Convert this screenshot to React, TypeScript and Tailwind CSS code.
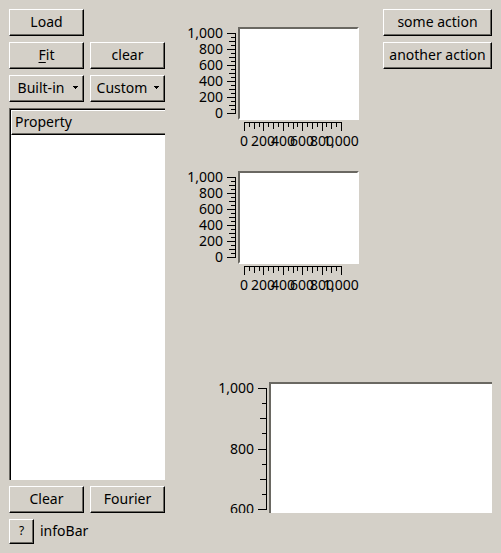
import type { ReactNode } from "react";
import clsx from "clsx";

type ButtonProps = { children: ReactNode; menu?: boolean; small?: boolean };

function ToolButton({ children, menu, small }: ButtonProps) {
  return (
    <button
      type="button"
      aria-haspopup={menu ? "menu" : undefined}
      className={clsx(
        "flex items-center justify-center whitespace-nowrap border border-t-white border-l-white border-r-black border-b-black bg-[#d4d0c8] pb-px shadow-[inset_-1px_-1px_0_#6a6862]",
        small ? "h-[25px] w-[25px] text-xs" : "h-[27px] w-full",
      )}
    >
      {menu ? (
        <>
          <span className="flex-1 text-center">{children}</span>
          <svg width="11" height="4" viewBox="0 0 11 4" shapeRendering="crispEdges" aria-hidden="true">
            <path d="M1 0h5v1h-1v1h-1v1h-1v-1h-1v-1h-1z" />
          </svg>
        </>
      ) : (
        <span>{children}</span>
      )}
    </button>
  );
}

type Tick = { at: number; label?: string; size: number };

/* Four sub-divisions per labelled step, the middle one a little longer. */
function makeTicks(values: number[], start: number, step: number): Tick[] {
  const ticks: Tick[] = [];
  values.forEach((value, i) => {
    ticks.push({ at: Math.round(start + i * step), label: value.toLocaleString("en-US"), size: 9 });
    if (i < values.length - 1) {
      [1, 2, 3].forEach((n) =>
        ticks.push({ at: Math.round(start + i * step + (n * step) / 4), size: n === 2 ? 7 : 5 }),
      );
    }
  });
  return ticks;
}

const smallY = makeTicks([1000, 800, 600, 400, 200, 0], 6, 16);
const smallX = makeTicks([0, 200, 400, 600, 800, 1000], 6, 19.4);
const largeY = makeTicks([1000, 800, 600], 6, 60.5);

function LeftAxis({ ticks, height }: { ticks: Tick[]; height: number }) {
  const last = ticks[ticks.length - 1].at;
  return (
    <svg width="51" height={height} className="shrink-0 overflow-visible" shapeRendering="crispEdges">
      <rect x="48" y="6" width="1" height={last - 5} />
      {ticks.map((t) => (
        <g key={t.at}>
          <rect x={49 - t.size} y={t.at} width={t.size} height="1" />
          {t.label && (
            <text x="36" y={t.at + 5} textAnchor="end">
              {t.label}
            </text>
          )}
        </g>
      ))}
    </svg>
  );
}

function BottomAxis({ ticks }: { ticks: Tick[] }) {
  const last = ticks[ticks.length - 1].at;
  return (
    <svg width="121" height="30" className="block overflow-visible" shapeRendering="crispEdges">
      <rect x="6" y="2" width={last - 5} height="1" />
      {ticks.map((t) => (
        <g key={t.at}>
          <rect x={t.at} y="2" width="1" height={t.size} />
          {t.label && (
            <text x={t.at} y="26" textAnchor="middle">
              {t.label}
            </text>
          )}
        </g>
      ))}
    </svg>
  );
}

function SmallPlot() {
  return (
    <div className="flex">
      <LeftAxis ticks={smallY} height={93} />
      <div>
        <div className="h-[93px] w-[121px] border-2 border-t-[#6a6862] border-l-[#6a6862] border-r-white border-b-white bg-white" />
        <BottomAxis ticks={smallX} />
      </div>
    </div>
  );
}

export default function App() {
  return (
    <div className="flex h-screen flex-col gap-1.5 bg-[#d4d0c8] p-[9px] font-['Noto_Sans',sans-serif] text-sm leading-4 text-black">
      <div className="flex min-h-0 flex-1 gap-1.5">
        <section className="flex w-[156px] shrink-0 flex-col gap-1.5">
          <div className="grid grid-cols-2 gap-1.5">
            <ToolButton>Load</ToolButton>
            <span />
            <ToolButton>
              <span className="underline underline-offset-2">F</span>it
            </ToolButton>
            <ToolButton>clear</ToolButton>
            <ToolButton menu>Built-in</ToolButton>
            <ToolButton menu>Custom</ToolButton>
          </div>
          <div className="min-h-0 flex-1 border-t border-l border-[#6a6862] bg-white">
            <div className="h-full border-t border-l border-black">
              <table className="w-full border-separate border-spacing-0">
                <thead>
                  <tr>
                    <th className="h-[25px] border-t border-b border-l border-t-white border-b-black border-l-white bg-[#d4d0c8] px-[3px] pb-0.5 text-left font-normal shadow-[inset_0_-1px_0_#6a6862]">
                      Property
                    </th>
                  </tr>
                </thead>
              </table>
            </div>
          </div>
          <div className="grid grid-cols-2 gap-1.5">
            <ToolButton>Clear</ToolButton>
            <ToolButton>Fourier</ToolButton>
          </div>
        </section>

        <main className="flex min-w-0 flex-1 flex-col">
          <div className="flex gap-2">
            <div className="flex flex-1 flex-col items-center gap-[21px] pt-[18px]">
              <SmallPlot />
              <SmallPlot />
            </div>
            <div className="flex w-[109px] flex-col gap-1.5">
              <ToolButton>some action</ToolButton>
              <ToolButton>another action</ToolButton>
            </div>
          </div>
          <div className="mt-[88px] flex min-h-0 flex-1 overflow-hidden pl-[47px]">
            <LeftAxis ticks={largeY} height={131} />
            <div className="flex-1 border-t-2 border-l-2 border-[#6a6862] bg-white" />
          </div>
        </main>
      </div>

      <footer className="flex items-center gap-1.5">
        <ToolButton small>?</ToolButton>
        <span className="pb-px">infoBar</span>
      </footer>
    </div>
  );
}
